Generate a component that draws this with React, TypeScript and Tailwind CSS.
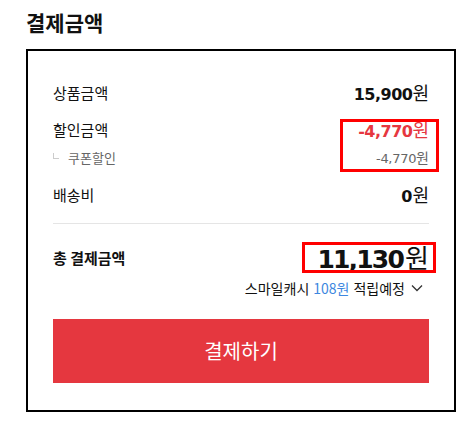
import React from 'react';

const Won = ({ className = '' }: { className?: string }) => (
  <span className={`font-normal tracking-normal font-['Noto_Sans_CJK_KR',sans-serif] ${className}`}>원</span>
);

export default function App() {
  return (
    <div className="w-[473px] h-[425px] bg-white font-['Noto_Sans_CJK_KR',sans-serif] text-[#111]">
      <div className="pl-[26px] pt-[8px]">
        <h2 className="h-[28px] text-[21px] leading-[28px] font-bold">결제금액</h2>

        <div className="relative mt-[13px] w-[430px] border-2 border-black px-[25px] pt-[30px] pb-[27px]">
          {/* 상품금액 */}
          <div className="flex h-[24px] items-center justify-between">
            <span className="text-[15px]">상품금액</span>
            <span className="font-['DejaVu_Sans',sans-serif] text-[16px] font-bold tracking-[-0.5px]">
              15,900<Won className="text-[18px]" />
            </span>
          </div>

          {/* 할인금액 */}
          <div className="mt-[13px] flex h-[24px] items-center justify-between">
            <span className="text-[15px]">할인금액</span>
            <span className="font-['DejaVu_Sans',sans-serif] text-[16px] font-bold tracking-[-0.5px] text-[#e63740]">
              -4,770<Won className="text-[18px]" />
            </span>
          </div>
          <div className="mt-[6px] flex h-[20px] items-center justify-between text-[13px] text-[#666]">
            <div className="flex items-center">
              <span className="mt-[-4px] h-[6px] w-[6px] border-b border-l border-[#ccc]" />
              <span className="ml-[9px]">쿠폰할인</span>
            </div>
            <span className="font-['DejaVu_Sans',sans-serif] tracking-[-0.3px]">
              -4,770<Won className="text-[14px]" />
            </span>
          </div>

          {/* 배송비 */}
          <div className="mt-[15px] flex h-[24px] items-center justify-between">
            <span className="text-[15px]">배송비</span>
            <span className="font-['DejaVu_Sans',sans-serif] text-[16px] font-bold">
              0<Won className="text-[18px]" />
            </span>
          </div>

          <div className="mt-[16px] h-px bg-[#e5e5e5]" />

          {/* 총 결제금액 */}
          <div className="mt-[16px] flex h-[36px] items-center justify-between">
            <span className="text-[15px] font-bold">총 결제금액</span>
            <span className="font-['DejaVu_Sans',sans-serif] text-[25px] font-bold tracking-[-1.8px]">
              11,130<Won className="ml-[2px] text-[26px]" />
            </span>
          </div>

          <div className="mt-[2px] flex h-[20px] items-center justify-end text-[14px]">
            <span>스마일캐시</span>
            <span className="ml-[4px] text-[#3d87e0]">108원</span>
            <span className="ml-[4px]">적립예정</span>
            <svg className="ml-[6px] mr-[6px]" width="12" height="8" viewBox="0 0 12 8" fill="none">
              <path d="M1 1.5L6 6.5L11 1.5" stroke="#333" strokeWidth="1.3" />
            </svg>
          </div>

          <button className="mt-[21px] flex h-[64px] w-full items-center justify-center bg-[#e5373f] text-[20px] text-white">
            결제하기
          </button>

          {/* annotation outlines */}
          <div className="absolute left-[312px] top-[68px] h-[53px] w-[99px] border-[3px] border-[#ff0000]" />
          <div className="absolute left-[274px] top-[191px] h-[31px] w-[134px] border-[3px] border-[#ff0000]" />
        </div>
      </div>
    </div>
  );
}
